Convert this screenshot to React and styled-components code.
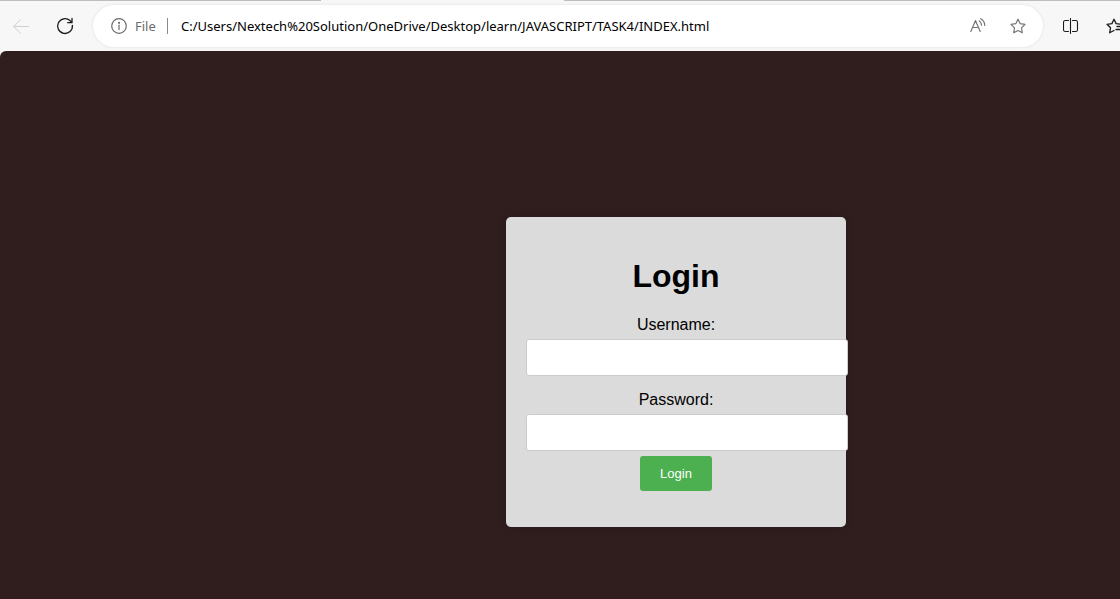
import React from "react";
import styled, { createGlobalStyle } from "styled-components";

const GlobalStyle = createGlobalStyle`
  *, *::before, *::after { box-sizing: border-box; }
  html, body, #root { height: 100%; }
  body { margin: 0; background: #f7f7f7; font-family: "Liberation Sans", Arial, sans-serif; }
`;

const Browser = styled.div`
  display: flex;
  flex-direction: column;
  min-height: 100%;
  overflow: hidden;
`;

const TabStrip = styled.div`
  display: flex;
  height: 1px;
`;

const StripEdge = styled.div`
  flex: ${(p) => (p.$grow ? "1" : "0 0 " + p.$width)};
  background: ${(p) => (p.$active ? "#f7f7f7" : "#bdbdbd")};
`;

const Toolbar = styled.header`
  display: flex;
  align-items: center;
  height: 50px;
  background: #f7f7f7;
`;

const ToolButton = styled.button`
  display: flex;
  flex: none;
  align-items: center;
  justify-content: ${(p) => p.$align || "center"};
  width: ${(p) => p.$width};
  height: 32px;
  padding: ${(p) => p.$pad || "0"};
  border: 0;
  background: transparent;
  color: ${(p) => p.$color || "#1b1b1b"};
  overflow: hidden;
`;

const Icon = styled.svg`
  flex: none;
  display: block;
  fill: none;
  stroke: currentColor;
  stroke-linecap: round;
  stroke-linejoin: round;
`;

const AddressBar = styled.div`
  display: flex;
  flex: 1;
  align-items: center;
  min-width: 0;
  height: 42px;
  margin-left: 8px;
  padding: 0 5px 0 10px;
  border-radius: 21px;
  background: #fff;
  box-shadow: 0 0 3px rgba(0, 0, 0, 0.1);
`;

const SiteInfo = styled.button`
  display: flex;
  flex: none;
  align-items: center;
  gap: 8px;
  width: 64px;
  padding: 0 0 0 8px;
  border: 0;
  background: transparent;
  color: #6b6b6b;
  font: 13px/20px "Noto Sans", "Open Sans", sans-serif;
`;

const Divider = styled.span`
  flex: none;
  width: 1px;
  height: 16px;
  background: #8a8a8a;
`;

const UrlInput = styled.input`
  flex: 1;
  min-width: 0;
  height: 24px;
  margin-left: 13px;
  padding: 0;
  border: 0;
  outline: 0;
  background: transparent;
  color: #000;
  font: 13px/20px "Noto Sans", "Open Sans", sans-serif;
`;

const Page = styled.main`
  display: flex;
  flex: 1;
  align-items: center;
  justify-content: center;
  padding: 94px 0 0 232px;
  border-top-left-radius: 6px;
  background: #301e1e;
`;

const Card = styled.section`
  width: 340px;
  padding: 20px;
  border-radius: 5px;
  background: #dbdbdb;
  box-shadow: 0 0 10px rgba(0, 0, 0, 0.2);
  text-align: center;
`;

const Title = styled.h1`
  margin: 21px 0;
  color: #000;
  font-size: 32px;
  line-height: 37px;
`;

const LoginForm = styled.form`
  margin-bottom: 16px;
`;

const Label = styled.label`
  display: block;
  margin-bottom: 5px;
  font-size: 16px;
  line-height: 18px;
`;

const Field = styled.div`
  margin-bottom: ${(p) => (p.$last ? "5px" : "15px")};
`;

const TextBox = styled.input`
  display: block;
  box-sizing: content-box;
  width: 100%;
  height: 15px;
  padding: 10px;
  border: 1px solid #ccc;
  border-radius: 3px;
  background: #fff;
  font-size: 13px;
`;

const Submit = styled.button`
  display: block;
  margin: 0 auto;
  padding: 10px 20px;
  border: 0;
  border-radius: 3px;
  background: #4caf50;
  color: #fff;
  font: 13px/15px "Liberation Sans", Arial, sans-serif;
`;

const STAR = "M8 1.2 10.1 5.6 15 6.3 11.5 9.8 12.3 14.8 8 12.5 3.7 14.8 4.5 9.8 1 6.3 5.9 5.6Z";

const BackIcon = () => (
  <Icon width="16" height="16" viewBox="0 0 16 16">
    <path d="M15.5 8.5H.8M7.5 1.7.7 8.5l6.8 6.8" />
  </Icon>
);

const ReloadIcon = () => (
  <Icon width="18" height="18" viewBox="0 0 18 18" strokeWidth="1.3">
    <path d="M16.4 8.4A7.4 7.4 0 1 1 14 3.6L15.8 5.5M16 1.5v4.2h-4.3" />
  </Icon>
);

const InfoIcon = () => (
  <Icon width="16" height="16" viewBox="0 0 16 16" strokeWidth="1.2">
    <circle cx="8" cy="8" r="7.3" />
    <path d="M8 7.2v4.2" />
    <circle cx="8" cy="4.8" r=".5" fill="currentColor" />
  </Icon>
);

const ReadAloudIcon = () => (
  <Icon width="16" height="16" viewBox="0 0 16 16" strokeWidth="1.2">
    <path d="M.8 13.5 5.5 2.5l4.7 11M2.5 9.5h6" />
    <path d="M9.3 2.9Q11.3 4.4 11.5 7.1M10.7.7Q14.8 3 14.7 7.4" />
  </Icon>
);

const StarIcon = () => (
  <Icon width="16" height="16" viewBox="0 0 16 16" strokeWidth="1.2">
    <path d={STAR} />
  </Icon>
);

const SplitIcon = () => (
  <Icon width="16" height="16" viewBox="0 0 16 16" strokeWidth="1.1">
    <path d="M5.5 2.5H2.3Q.5 2.5.5 4.3v7.4q0 1.8 1.8 1.8h3.2M9.5 2.5h3.2q1.8 0 1.8 1.8v7.4q0 1.8-1.8 1.8H9.5M7.5.5v15" />
  </Icon>
);

const FavoritesIcon = () => (
  <Icon width="18" height="16" viewBox="0 0 18 16" strokeWidth="1.3">
    <path d="M14 6.1 10.1 5.6 8 1.2 5.9 5.6 1 6.3l3.5 3.5-.8 5L8 12.5M11 8.5h6M10 11.5H17" />
  </Icon>
);

export default function App() {
  return (
    <>
      <GlobalStyle />
      <Browser>
        <TabStrip>
          <StripEdge $width="321px" />
          <StripEdge $width="243px" $active />
          <StripEdge $grow />
        </TabStrip>
        <Toolbar>
          <ToolButton $width="42px" $color="#cfcfcf" aria-label="Back" disabled>
            <BackIcon />
          </ToolButton>
          <ToolButton $width="43px" $pad="0 0 0 3px" aria-label="Refresh">
            <ReloadIcon />
          </ToolButton>
          <AddressBar>
            <SiteInfo>
              <InfoIcon />
              File
            </SiteInfo>
            <Divider />
            <UrlInput
              aria-label="Address"
              spellCheck={false}
              defaultValue="C:/Users/Nextech%20Solution/OneDrive/Desktop/learn/JAVASCRIPT/TASK4/INDEX.html"
            />
            <ToolButton $width="40px" $color="#767676" aria-label="Read aloud">
              <ReadAloudIcon />
            </ToolButton>
            <ToolButton $width="40px" $color="#767676" aria-label="Add to favorites">
              <StarIcon />
            </ToolButton>
          </AddressBar>
          <ToolButton $width="54px" $pad="0 0 0 2px" aria-label="Split screen">
            <SplitIcon />
          </ToolButton>
          <ToolButton $width="23px" $pad="0 0 0 9px" $align="flex-start" aria-label="Favorites">
            <FavoritesIcon />
          </ToolButton>
        </Toolbar>
        <Page>
          <Card>
            <Title>Login</Title>
            <LoginForm onSubmit={(e) => e.preventDefault()}>
              <Field>
                <Label htmlFor="username">Username:</Label>
                <TextBox id="username" type="text" />
              </Field>
              <Field $last>
                <Label htmlFor="password">Password:</Label>
                <TextBox id="password" type="password" />
              </Field>
              <Submit type="submit">Login</Submit>
            </LoginForm>
          </Card>
        </Page>
      </Browser>
    </>
  );
}
